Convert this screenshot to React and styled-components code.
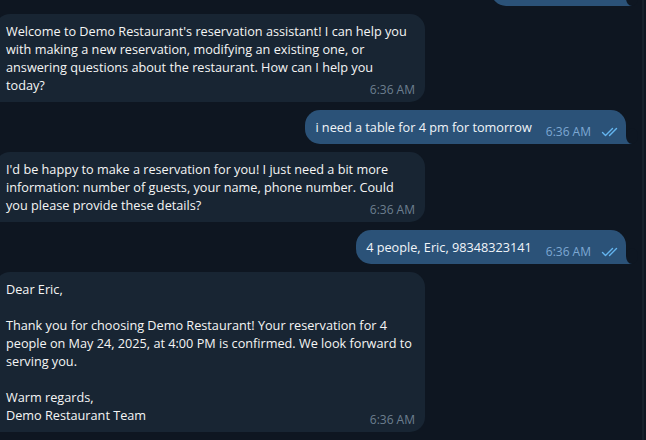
import React from 'react';
import styled, { createGlobalStyle } from 'styled-components';

const GlobalStyle = createGlobalStyle`
  html, body {
    margin: 0;
    padding: 0;
    background: #0e1621;
    overflow: hidden;
  }
  * { box-sizing: border-box; }
`;

const Screen = styled.div`
  display: flex;
  width: 646px;
  height: 440px;
  background: #0e1621;
  font-family: "Open Sans", "Noto Sans", sans-serif;
  overflow: hidden;
`;

const Chat = styled.div`
  flex: 1;
  min-width: 0;
  display: flex;
  flex-direction: column;
  justify-content: flex-end;
  gap: 8px;
  padding: 0 10px 8px 0;
  overflow: hidden;
`;

const ScrollTrack = styled.div`
  width: 2px;
  margin-right: 2px;
  background: #17212b;
`;

const Row = styled.div`
  display: flex;
  flex-shrink: 0;
  justify-content: ${(p) => (p.$out ? 'flex-end' : 'flex-start')};
  padding-right: ${(p) => (p.$out ? '6px' : '0')};
  margin-left: ${(p) => (p.$out ? '0' : '-5px')};
`;

const Bubble = styled.div`
  position: relative;
  display: flow-root;
  width: ${(p) => (p.$out ? 'auto' : '430px')};
  padding: ${(p) => (p.$out ? '8px 7px 8px 10px' : '8px 10px 8px 11px')};
  background: ${(p) => (p.$out ? '#2b5278' : '#182533')};
  color: ${(p) => (p.$out ? '#f1f5f9' : '#f5f5f5')};
  border-radius: ${(p) => (p.$out ? '15px 15px 0 15px' : '15px 15px 15px 0')};
  font-size: 12.7px;
  line-height: 18px;

  ${(p) =>
    p.$out &&
    `
    &::before {
      content: '';
      position: absolute;
      right: -6px;
      bottom: 0;
      width: 6px;
      height: 8px;
      background: #2b5278;
    }
    &::after {
      content: '';
      position: absolute;
      right: -12px;
      bottom: 8px;
      width: 12px;
      height: 16px;
      transform: translateY(50%);
      border-radius: 50%;
      background: #0e1621;
    }
  `}
`;

const Line = styled.div`
  min-height: 18px;
  white-space: pre;
`;

const Meta = styled.span`
  float: right;
  position: relative;
  top: 5px;
  display: inline-flex;
  align-items: center;
  gap: 10px;
  margin-left: 14px;
  font-size: 12px;
  line-height: 18px;
  white-space: nowrap;
  color: ${(p) => (p.$out ? '#7da8d3' : '#6d7f8f')};
`;

const Checks = () => (
  <svg width="18" height="10" viewBox="0 0 18 10" fill="none" stroke="#64b5ef" strokeWidth="1.4" strokeLinecap="round" strokeLinejoin="round">
    <path d="M1.5 5.5 L4.5 8.5 L11.5 1.5" />
    <path d="M8.5 8.5 L15.5 1.5" />
  </svg>
);

const messages = [
  { out: true, lines: ['Hello'] },
  {
    out: false,
    lines: [
      "Welcome to Demo Restaurant's reservation assistant! I can help you",
      'with making a new reservation, modifying an existing one, or',
      'answering questions about the restaurant. How can I help you',
      'today?',
    ],
  },
  { out: true, lines: ['i need a table for 4 pm for tomorrow'] },
  {
    out: false,
    lines: [
      "I'd be happy to make a reservation for you! I just need a bit more",
      'information: number of guests, your name, phone number. Could',
      'you please provide these details?',
    ],
  },
  { out: true, lines: ['4 people, Eric, 98348323141'] },
  {
    out: false,
    lines: [
      'Dear Eric,',
      '',
      'Thank you for choosing Demo Restaurant! Your reservation for 4',
      'people on May 24, 2025, at 4:00 PM is confirmed. We look forward to',
      'serving you.',
      '',
      'Warm regards,',
      'Demo Restaurant Team',
    ],
  },
];

export default function App() {
  return (
    <>
      <GlobalStyle />
      <Screen>
        <Chat>
          {messages.map((m, i) => (
            <Row key={i} $out={m.out}>
              <Bubble $out={m.out}>
                {m.lines.map((line, j) => (
                  <Line key={j}>
                    {line}
                    {j === m.lines.length - 1 && (
                      <Meta $out={m.out}>
                        6:36 AM
                        {m.out && <Checks />}
                      </Meta>
                    )}
                  </Line>
                ))}
              </Bubble>
            </Row>
          ))}
        </Chat>
        <ScrollTrack />
      </Screen>
    </>
  );
}
